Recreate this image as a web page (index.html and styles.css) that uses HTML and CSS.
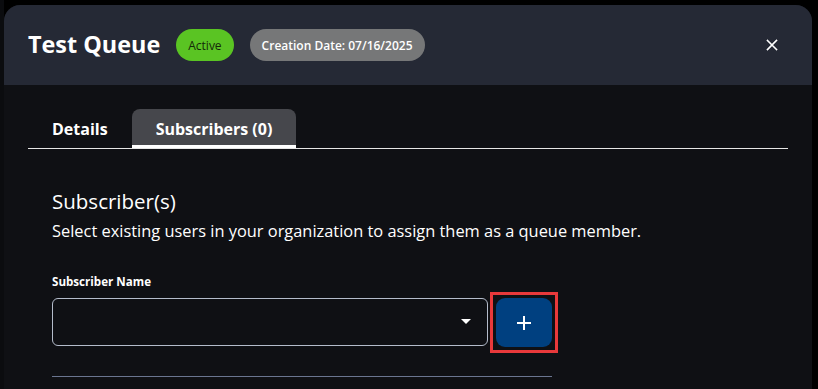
FILE: index.html
```html
<!DOCTYPE html>
<html>
<head>
<meta charset="utf-8">
<link rel="stylesheet" href="styles.css">
</head>
<body>
<div class="page">
  <div class="modal">
    <div class="header">
      <h1 class="title">Test Queue</h1>
      <span class="badge badge-active">Active</span>
      <span class="badge badge-date">Creation Date: 07/16/2025</span>
      <button class="close" aria-label="Close">
        <svg width="12" height="12" viewBox="0 0 12 12"><path d="M1.5 1.5L10.5 10.5M10.5 1.5L1.5 10.5" stroke="#fff" stroke-width="1.6" stroke-linecap="square"/></svg>
      </button>
    </div>
    <div class="body">
      <div class="tabs">
        <div class="tab">Details</div>
        <div class="tab tab-active">Subscribers (0)</div>
      </div>
      <div class="section">
        <h2 class="section-title">Subscriber(s)</h2>
        <p class="section-desc">Select existing users in your organization to assign them as a queue member.</p>
        <label class="field-label">Subscriber Name</label>
        <div class="field-row">
          <div class="select">
            <svg class="caret" width="10" height="6" viewBox="0 0 10 6"><path d="M0 0H10L5 5Z" fill="#fff"/></svg>
          </div>
          <div class="add-wrap">
            <button class="add-btn" aria-label="Add">
              <svg width="16" height="16" viewBox="0 0 16 16"><path d="M8 1V15M1 8H15" stroke="#fff" stroke-width="2"/></svg>
            </button>
          </div>
        </div>
        <div class="divider"></div>
      </div>
    </div>
  </div>
</div>
</body>
</html>
```
FILE: styles.css
```css
* { box-sizing: border-box; }
html, body { margin: 0; padding: 0; }
body {
  background: #0b0c0f;
  font-family: "Open Sans", "Noto Sans", sans-serif;
  color: #fff;
  width: 818px;
  height: 389px;
  overflow: hidden;
}
.page {
  height: 389px;
  padding: 5px 6px 0 4px;
  background: linear-gradient(to right, #0b0c0f 0 4px, transparent 4px), #000;
}
.modal {
  background: #0f1014;
  border-radius: 16px 16px 0 0;
  height: 384px;
  overflow: hidden;
}
.header {
  height: 80px;
  background: #252935;
  display: flex;
  align-items: center;
  padding: 0 24px 0 24px;
}
.title {
  margin: 0;
  font-size: 23.4px;
  font-weight: 700;
  letter-spacing: 0;
  margin-right: 16px;
  line-height: 1;
}
.badge {
  display: inline-flex;
  align-items: center;
  height: 32px;
  border-radius: 16px;
  font-size: 12px;
  padding: 0 12px;
}
.badge-active {
  background: #5ac423;
  color: #15290a;
  margin-right: 16px;
}
.badge-date {
  background: #767778;
  color: #fff;
  font-weight: 600;
}
.close {
  margin-left: auto;
  background: none;
  border: 0;
  padding: 0;
  width: 20px;
  height: 20px;
  display: flex;
  align-items: center;
  justify-content: center;
  margin-right: 6px;
}
.body {
  padding: 24px 24px 0 24px;
}
.tabs {
  display: flex;
  border-bottom: 1px solid #e6e6e6;
  height: 40px;
}
.tab {
  padding: 0 24px;
  height: 39px;
  display: flex;
  align-items: center;
  font-size: 16px;
  font-weight: 700;
  border-radius: 8px 8px 0 0;
}
.tab-active {
  background: #46474c;
  border-bottom: 3px solid #fff;
  padding-top: 3px;
  padding-left: 24px;
  padding-right: 24px;
}
.section {
  padding: 0 24px;
}
.section-title {
  margin: 38px 0 0 0;
  font-size: 20.5px;
  font-weight: 400;
  line-height: 28px;
}
.section-desc {
  margin: 4px 0 0 0;
  font-size: 16.4px;
  line-height: 24px;
}
.field-label {
  display: block;
  margin-top: 31px;
  font-size: 11.6px;
  font-weight: 700;
  line-height: 16px;
}
.field-row {
  display: flex;
  margin-top: 8px;
  gap: 8px;
  width: 500px;
}
.select {
  flex: 0 0 436px;
  height: 48px;
  border: 1px solid #b4bccb;
  border-radius: 6px;
  display: flex;
  align-items: center;
  justify-content: flex-end;
  padding-right: 16px;
}
.add-wrap {
  margin: -6px -5px -4px -6px;
  border: 3px solid #e8393b;
  padding: 3px;
}
.add-btn {
  width: 56px;
  height: 49px;
  background: #004080;
  border: 0;
  border-radius: 9px;
  display: flex;
  align-items: center;
  justify-content: center;
}
.divider {
  margin-top: 27px;
  width: 500px;
  height: 1px;
  background: #6a7590;
}
```
